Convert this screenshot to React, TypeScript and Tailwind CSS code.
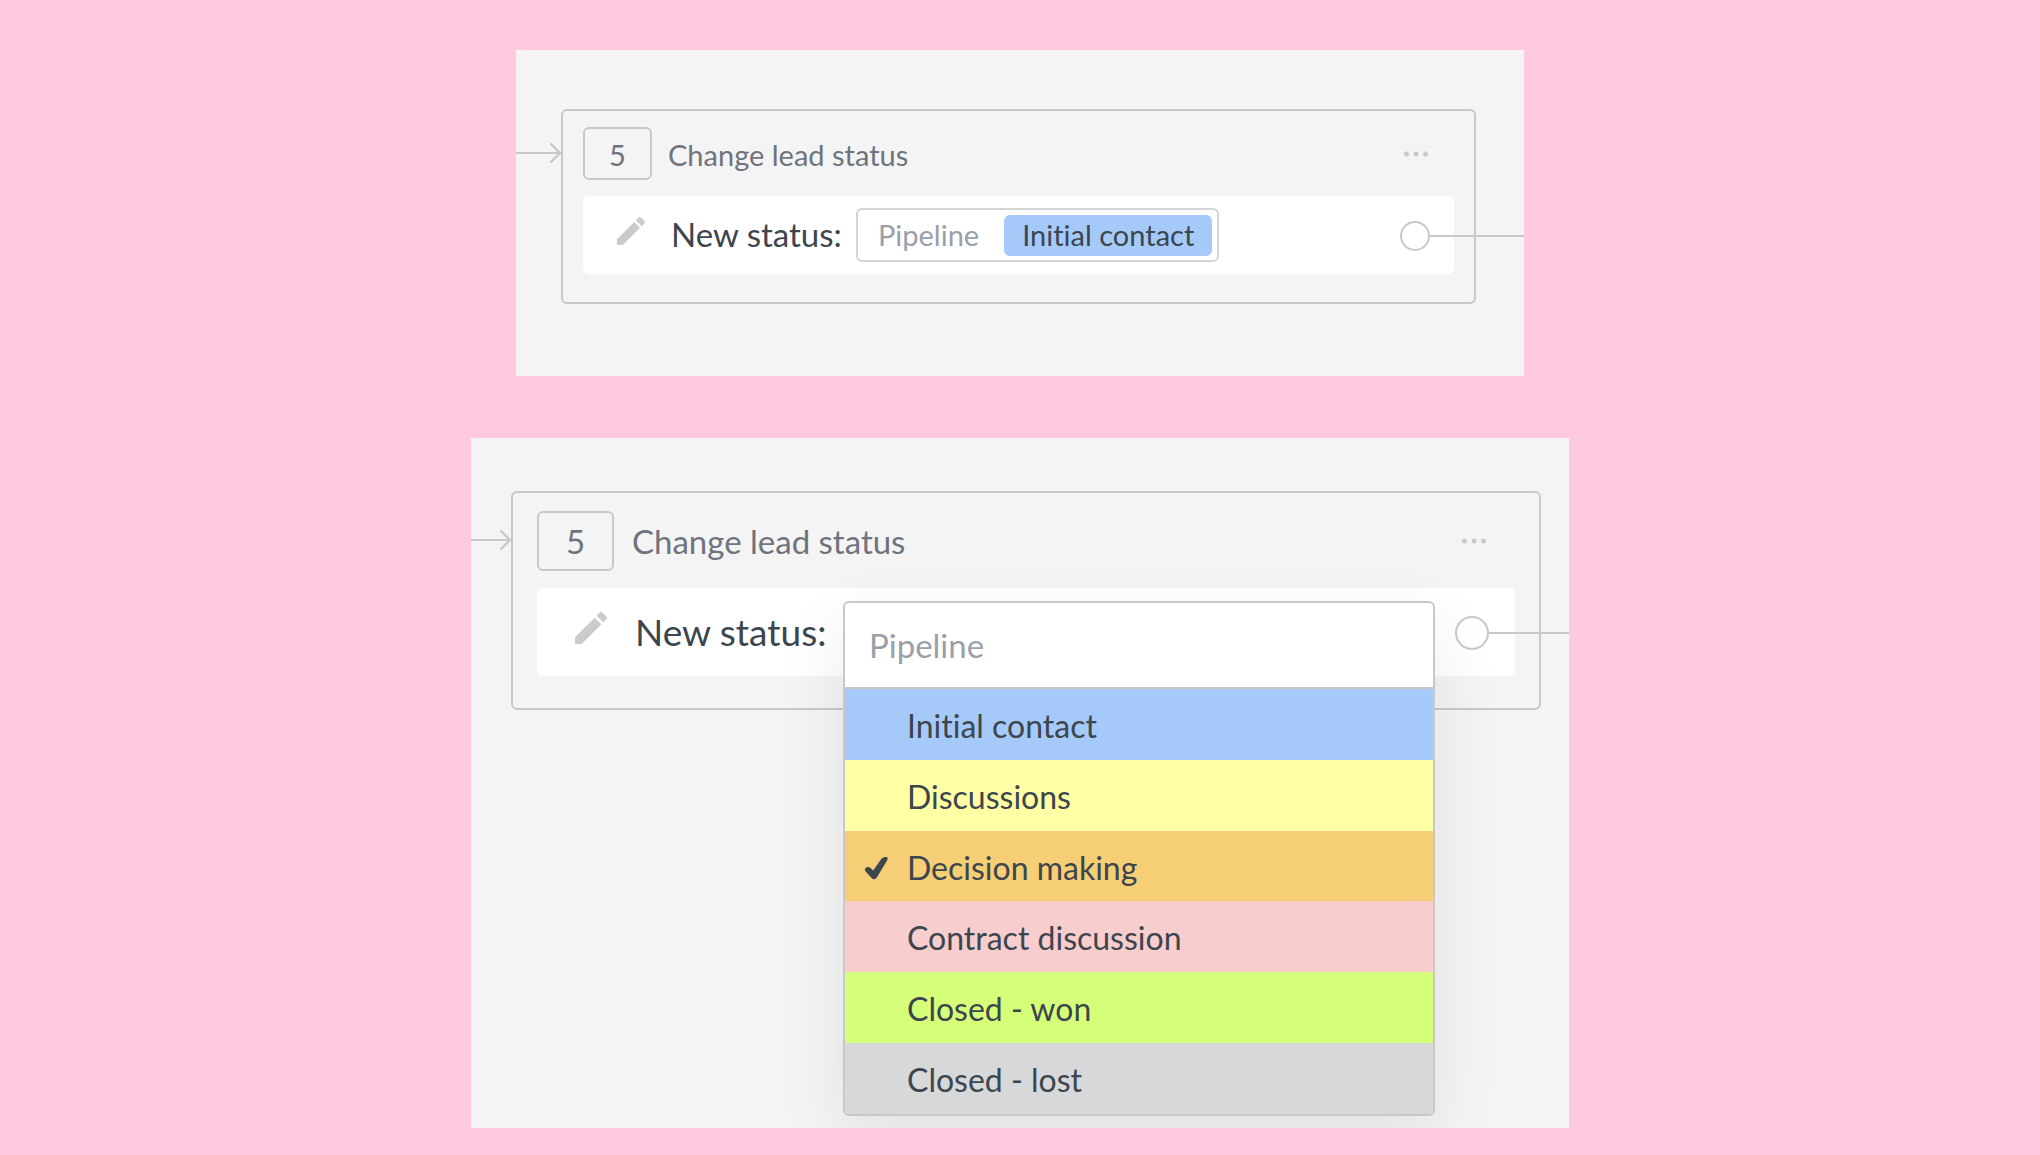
import { useState } from 'react';
import clsx from 'clsx';

type Size = 'md' | 'lg';

const stages = [
    { label: 'Initial contact', color: 'bg-[#a5cafa]' },
    { label: 'Discussions', color: 'bg-[#ffffa5]' },
    { label: 'Decision making', color: 'bg-[#f6ce76]' },
    { label: 'Contract discussion', color: 'bg-[#f7cecd]' },
    { label: 'Closed - won', color: 'bg-[#d5ff79]' },
    { label: 'Closed - lost', color: 'bg-[#d6d8da]' },
];

const sizes = {
    md: {
        arrow: 'w-[45px] mt-[34px]',
        card: 'px-5 pt-4 pb-7',
        header: 'gap-4 pr-[25px]',
        step: 'w-[69px] h-[53px] text-[29px]',
        title: 'text-[29px]',
        row: 'mt-4 h-[78px] pl-[34px] pr-6',
        pencil: 'w-7 h-7 mr-[26px] -mt-2',
        label: 'w-[185px] text-[33px]',
        port: 'w-[30px] h-[30px]',
        line: 'w-[100px]',
    },
    lg: {
        arrow: 'w-10 mt-[39px]',
        card: 'px-6 pt-[18px] pb-8',
        header: 'gap-[18px] pr-7',
        step: 'w-[77px] h-[60px] text-[33px]',
        title: 'text-[33px]',
        row: 'mt-[17px] h-[88px] pl-[38px] pr-[26px]',
        pencil: 'w-8 h-8 mr-[28px] -mt-2',
        label: 'w-[208px] text-[37px]',
        port: 'w-[34px] h-[34px]',
        line: 'w-[84px]',
    },
};

function ArrowIn({ size }: { size: Size }) {
    const width = size === 'lg' ? 40 : 45;
    return (
        <svg
            className={clsx('shrink-0 h-5 overflow-visible', sizes[size].arrow)}
            viewBox={`0 0 ${width} 20`}
            fill="none"
            stroke="#c8c8c8"
            strokeWidth="2.2"
        >
            <path d={`M0 10H${width}M${width - 10.5} 0.5L${width - 1} 10L${width - 10.5} 19.5`} />
        </svg>
    );
}

function Pencil() {
    return (
        <svg viewBox="3 3 18 18" className="w-full h-full" fill="#cbcbcb">
            <path d="M3 17.25V21h3.75L17.81 9.94l-3.75-3.75L3 17.25zM20.71 7.04a1 1 0 0 0 0-1.41l-2.34-2.34a1 1 0 0 0-1.41 0l-1.83 1.83 3.75 3.75 1.83-1.83z" />
        </svg>
    );
}

function Check() {
    return (
        <svg viewBox="0 0 24 24" className="w-6 h-6" fill="#3d454d">
            <path d="M1.2 12.6C2.2 10.8 4.6 10.4 6.2 11.8L9.2 14.6L17.6 2.6C19 0.8 22 0.6 23.4 1.2C23.8 2.6 23.6 3.6 22.6 5.2L12.8 21.6C11.4 23.6 9.4 23.8 7.8 22.2L1.6 15.6C0.8 14.6 0.7 13.6 1.2 12.6Z" />
        </svg>
    );
}

function StatusCard({ size, children }: { size: Size; children: React.ReactNode }) {
    const s = sizes[size];

    return (
        <div className="flex items-start">
            <ArrowIn size={size} />
            <section className={clsx('flex-1 min-w-0 border-2 border-[#c8c8c8] rounded-md', s.card)}>
                <header className={clsx('flex items-center text-[#6f737d]', s.header)}>
                    <span className={clsx('flex items-center justify-center border-2 border-[#c8c8c8] rounded-md pt-0.5', s.step)}>
                        5
                    </span>
                    <h2 className={clsx('flex-1 pt-0.5', s.title)}>Change lead status</h2>
                    <button type="button" aria-label="More actions">
                        <svg width="26" height="6" viewBox="0 0 26 6" fill="#c8c8c8">
                            <circle cx="3.5" cy="3" r="2.5" />
                            <circle cx="13" cy="3" r="2.5" />
                            <circle cx="22.5" cy="3" r="2.5" />
                        </svg>
                    </button>
                </header>

                <div className={clsx('flex items-center bg-white rounded-md', s.row)}>
                    <button type="button" aria-label="Edit" className={clsx('shrink-0', s.pencil)}>
                        <Pencil />
                    </button>
                    <span className={clsx('shrink-0 whitespace-nowrap', s.label)}>New status:</span>
                    {children}
                    {/* Output port with its connector */}
                    <div className="ml-auto shrink-0 pt-0.5">
                        <div className={clsx('relative border-2 border-[#c8c8c8] rounded-full', s.port)}>
                            <div className={clsx('absolute left-full top-1/2 -translate-y-1/2 h-0.5 bg-[#c8c8c8]', s.line)} />
                        </div>
                    </div>
                </div>
            </section>
        </div>
    );
}

export default function App() {
    const [selected, setSelected] = useState('Decision making');

    return (
        <main className="min-h-screen bg-[#ffc9e0] flex flex-col items-center gap-[62px] pt-[50px] pb-[27px] font-['Lato','PT_Sans',sans-serif] [font-variant-ligatures:none] text-[#3d454d]">
            <div className="w-full max-w-[1008px] bg-[#f4f4f4] pt-[59px] pr-12 pb-[72px] overflow-hidden">
                <StatusCard size="md">
                    <button
                        type="button"
                        className="flex items-center h-[54px] border-2 border-[#d4d4d4] rounded-md pl-5 pr-[5px] gap-[25px] text-[29px] whitespace-nowrap"
                    >
                        <span className="text-[#9a9fa9]">Pipeline</span>
                        <span className="flex items-center h-[41px] px-[18px] rounded-md bg-[#a5cafa]">Initial contact</span>
                    </button>
                </StatusCard>
            </div>

            <div className="w-full max-w-[1098px] bg-[#f4f4f4] pt-[53px] pr-7 pb-[418px] overflow-hidden">
                <StatusCard size="lg">
                    <div className="relative self-start">
                        <div className="absolute left-0 top-[13px] w-[592px] border-2 border-[#c8c8c8] rounded-md bg-white overflow-hidden shadow-[0_24px_70px_rgba(0,0,0,0.08)] text-[32px]">
                            <div className="flex items-center h-[86px] pl-6 pt-0.5 border-b-2 border-[#c8c8c8] text-[33px] text-[#9a9fa9]">
                                Pipeline
                            </div>
                            <ul role="listbox" aria-label="New status" className="flex flex-col h-[425px]">
                                {stages.map((stage) => (
                                    <li
                                        key={stage.label}
                                        role="option"
                                        aria-selected={selected === stage.label}
                                        className={clsx('flex-1', stage.color)}
                                    >
                                        <button
                                            type="button"
                                            onClick={() => setSelected(stage.label)}
                                            className="flex items-center w-full h-full pl-[19px] pt-[3px] gap-[19px] text-left"
                                        >
                                            <span className="w-6 shrink-0">{selected === stage.label && <Check />}</span>
                                            {stage.label}
                                        </button>
                                    </li>
                                ))}
                            </ul>
                        </div>
                    </div>
                </StatusCard>
            </div>
        </main>
    );
}
